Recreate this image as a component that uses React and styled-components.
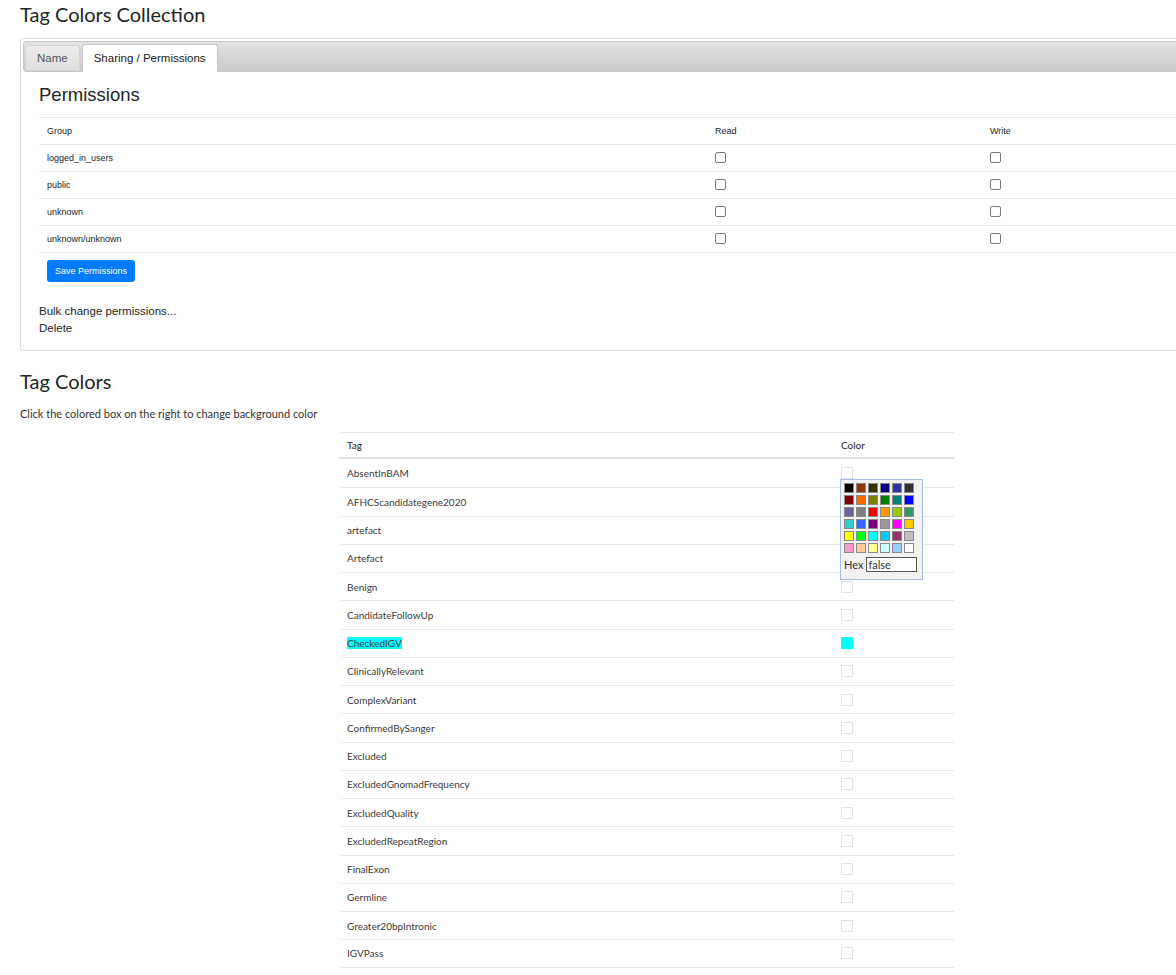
import React from "react";
import styled, { createGlobalStyle } from "styled-components";

const GlobalStyle = createGlobalStyle`
  html, body { margin: 0; padding: 0; background: #fff; }
  body { overflow: hidden; }
  * { box-sizing: border-box; }
`;

const SANS = `"Liberation Sans", Arial, sans-serif`;
const RALE = `Lato, "Open Sans", sans-serif`;

const Viewport = styled.div`
  width: 100vw;
  overflow: hidden;
`;

const Page = styled.div`
  width: 1273px;
  padding-left: 20px;
  padding-bottom: 40px;
  font-family: ${RALE};
  color: #212529;
`;

const Title = styled.h1`
  margin: 0;
  padding-top: 2px;
  font-family: ${RALE};
  font-weight: 400;
  font-size: 20px;
  line-height: 24px;
  color: #212529;
`;

const Panel = styled.div`
  margin-top: 12px;
  border: 1px solid #dddddd;
  border-radius: 3px;
  padding: 2px;
  background: #fff;
`;

const TabBar = styled.div`
  display: flex;
  align-items: flex-end;
  height: 31px;
  padding: 0 2px 0 1px;
  border: 1px solid #c9c9c9;
  border-radius: 3px;
  background: linear-gradient(#e4e4e4, #c9c9c9);
`;

const Tab = styled.div`
  font-family: ${SANS};
  font-size: 11.5px;
  line-height: 16px;
  padding: ${(p) => (p.$active ? "5px 11px 6px" : "4px 11px 4px")};
  margin-right: 2px;
  margin-bottom: ${(p) => (p.$active ? "-1px" : "0")};
  border: 1px solid ${(p) => (p.$active ? "#c5c5c5" : "#d3d3d3")};
  border-bottom: ${(p) => (p.$active ? "none" : "1px solid #d3d3d3")};
  border-radius: 3px 3px 0 0;
  background: ${(p) => (p.$active ? "#ffffff" : "linear-gradient(#ececec, #e0e0e0)")};
  color: ${(p) => (p.$active ? "#212121" : "#555555")};
  cursor: pointer;
`;

const TabBody = styled.div`
  padding: 12px 16px 11px;
`;

const PanelHeading = styled.h3`
  margin: 0 0 10.5px;
  font-family: ${SANS};
  font-weight: 400;
  font-size: 18.5px;
  line-height: 22px;
  color: #212529;
`;

const PermTable = styled.table`
  width: 100%;
  border-collapse: separate;
  border-spacing: 0;
  font-family: ${SANS};
  font-size: 9px;
  color: #212529;
`;

const PermCell = styled.td`
  height: 27px;
  padding: 0 8px;
  border-top: 1px solid #e6e8ea;
  text-align: left;
  font-weight: 400;
  vertical-align: middle;
  width: ${(p) => p.$w || "auto"};
`;

const ButtonCell = styled.td`
  padding: 7.5px 8px 8px;
  border-top: 1px solid #e6e8ea;
`;

const Check = styled.input.attrs({ type: "checkbox" })`
  appearance: none;
  display: block;
  width: 11px;
  height: 11px;
  margin: 0;
  border: 1px solid #7a7a7a;
  border-radius: 2px;
  background: #fff;
`;

const PrimaryButton = styled.button`
  height: 22px;
  padding: 0 8px;
  border: none;
  border-radius: 3px;
  background: #007bff;
  color: #fff;
  font-family: ${SANS};
  font-size: 9px;
  cursor: pointer;
`;

const Actions = styled.div`
  margin-top: 12.5px;
  display: flex;
  flex-direction: column;
`;

const ActionLink = styled.a`
  font-family: ${SANS};
  font-size: 11.5px;
  line-height: 17px;
  color: #212529;
  text-decoration: none;
  cursor: pointer;
`;

const SectionHeading = styled.h2`
  margin: 18px 0 0;
  font-family: ${RALE};
  font-weight: 400;
  font-size: 20px;
  line-height: 24px;
  color: #212529;
`;

const Hint = styled.p`
  margin: 13.5px 0 0;
  font-family: ${RALE};
  font-size: 11px;
  line-height: 16px;
  color: #333;
`;

const TagTable = styled.table`
  margin: 10px auto 0;
  width: 615px;
  border-collapse: separate;
  border-spacing: 0;
  font-family: ${RALE};
  font-size: 10px;
  color: #3a3a3a;
`;

const TagHead = styled.th`
  height: 27px;
  padding: 0 8px;
  border-top: 1px solid #e6e8ea;
  border-bottom: 2px solid #dde2e6;
  text-align: left;
  font-weight: 400;
  color: #212529;
  width: ${(p) => p.$w || "auto"};
`;

const TagCell = styled.td`
  height: 28.25px;
  padding: 0 8px;
  border-top: ${(p) => (p.$first ? "none" : "1px solid #e6e8ea")};
  border-bottom: ${(p) => (p.$last ? "1px solid #e6e8ea" : "none")};
  vertical-align: middle;
`;

const TagLabel = styled.span`
  background: ${(p) => p.$bg || "transparent"};
`;

const SwatchWrap = styled.div`
  position: relative;
  width: 12px;
  height: 12px;
`;

const Swatch = styled.div`
  width: 12px;
  height: 12px;
  border: ${(p) => (p.$color ? "none" : "1px solid #e2e2e2")};
  background: ${(p) => p.$color || "#fff"};
  cursor: pointer;
`;

const Picker = styled.div`
  position: absolute;
  top: 12px;
  left: -1px;
  z-index: 5;
  width: 83px;
  padding: 3px 3px 7px;
  border: 1px solid #a9bde0;
  background: #f2f2f2;
`;

const PaletteGrid = styled.div`
  display: grid;
  grid-template-columns: repeat(6, 10px);
  grid-auto-rows: 10px;
  gap: 2px;
`;

const PaletteChip = styled.div`
  border: 1px solid #8a8a8a;
  background: ${(p) => p.$c};
`;

const HexRow = styled.div`
  margin-top: 4px;
  display: flex;
  align-items: center;
  gap: 3px;
  font-family: ${RALE};
  font-size: 11px;
  color: #333;
`;

const HexInput = styled.input`
  width: 51px;
  height: 15px;
  padding: 0 1px;
  border: 1px solid #555;
  background: #fff;
  font-family: ${RALE};
  font-size: 11px;
  color: #333;
  outline: none;
`;

const palette = [
  "#000000", "#993300", "#333300", "#000080", "#333399", "#333333",
  "#800000", "#FF6600", "#808000", "#008000", "#008080", "#0000FF",
  "#666699", "#808080", "#FF0000", "#FF9900", "#99CC00", "#339966",
  "#33CCCC", "#3366FF", "#800080", "#999999", "#FF00FF", "#FFCC00",
  "#FFFF00", "#00FF00", "#00FFFF", "#00CCFF", "#993366", "#C0C0C0",
  "#FF99CC", "#FFCC99", "#FFFF99", "#CCFFFF", "#99CCFF", "#FFFFFF",
];

const groups = ["logged_in_users", "public", "unknown", "unknown/unknown"];

const tags = [
  { name: "AbsentInBAM", picker: true },
  { name: "AFHCScandidategene2020" },
  { name: "artefact" },
  { name: "Artefact" },
  { name: "Benign" },
  { name: "CandidateFollowUp" },
  { name: "CheckedIGV", color: "#00ffff" },
  { name: "ClinicallyRelevant" },
  { name: "ComplexVariant" },
  { name: "ConfirmedBySanger" },
  { name: "Excluded" },
  { name: "ExcludedGnomadFrequency" },
  { name: "ExcludedQuality" },
  { name: "ExcludedRepeatRegion" },
  { name: "FinalExon" },
  { name: "Germline" },
  { name: "Greater20bpIntronic" },
  { name: "IGVPass" },
];

export default function App() {
  return (
    <Viewport>
      <GlobalStyle />
      <Page>
        <Title>Tag Colors Collection</Title>
        <Panel>
          <TabBar>
            <Tab>Name</Tab>
            <Tab $active>Sharing / Permissions</Tab>
          </TabBar>
          <TabBody>
            <PanelHeading>Permissions</PanelHeading>
            <PermTable>
              <thead>
                <tr>
                  <PermCell as="th" $w="668px">Group</PermCell>
                  <PermCell as="th" $w="275px">Read</PermCell>
                  <PermCell as="th">Write</PermCell>
                </tr>
              </thead>
              <tbody>
                {groups.map((g) => (
                  <tr key={g}>
                    <PermCell>{g}</PermCell>
                    <PermCell><Check /></PermCell>
                    <PermCell><Check /></PermCell>
                  </tr>
                ))}
                <tr>
                  <ButtonCell colSpan={3}>
                    <PrimaryButton>Save Permissions</PrimaryButton>
                  </ButtonCell>
                </tr>
              </tbody>
            </PermTable>
            <Actions>
              <ActionLink>Bulk change permissions...</ActionLink>
              <ActionLink>Delete</ActionLink>
            </Actions>
          </TabBody>
        </Panel>

        <SectionHeading>Tag Colors</SectionHeading>
        <Hint>Click the colored box on the right to change background color</Hint>
        <TagTable>
          <thead>
            <tr>
              <TagHead $w="494px">Tag</TagHead>
              <TagHead>Color</TagHead>
            </tr>
          </thead>
          <tbody>
            {tags.map((t, i) => (
              <tr key={t.name}>
                <TagCell $first={i === 0} $last={i === tags.length - 1}>
                  <TagLabel $bg={t.color}>{t.name}</TagLabel>
                </TagCell>
                <TagCell $first={i === 0} $last={i === tags.length - 1}>
                  <SwatchWrap>
                    <Swatch $color={t.color} />
                    {t.picker && (
                      <Picker>
                        <PaletteGrid>
                          {palette.map((c) => (
                            <PaletteChip key={c} $c={c} />
                          ))}
                        </PaletteGrid>
                        <HexRow>
                          Hex
                          <HexInput defaultValue="false" />
                        </HexRow>
                      </Picker>
                    )}
                  </SwatchWrap>
                </TagCell>
              </tr>
            ))}
          </tbody>
        </TagTable>
      </Page>
    </Viewport>
  );
}
